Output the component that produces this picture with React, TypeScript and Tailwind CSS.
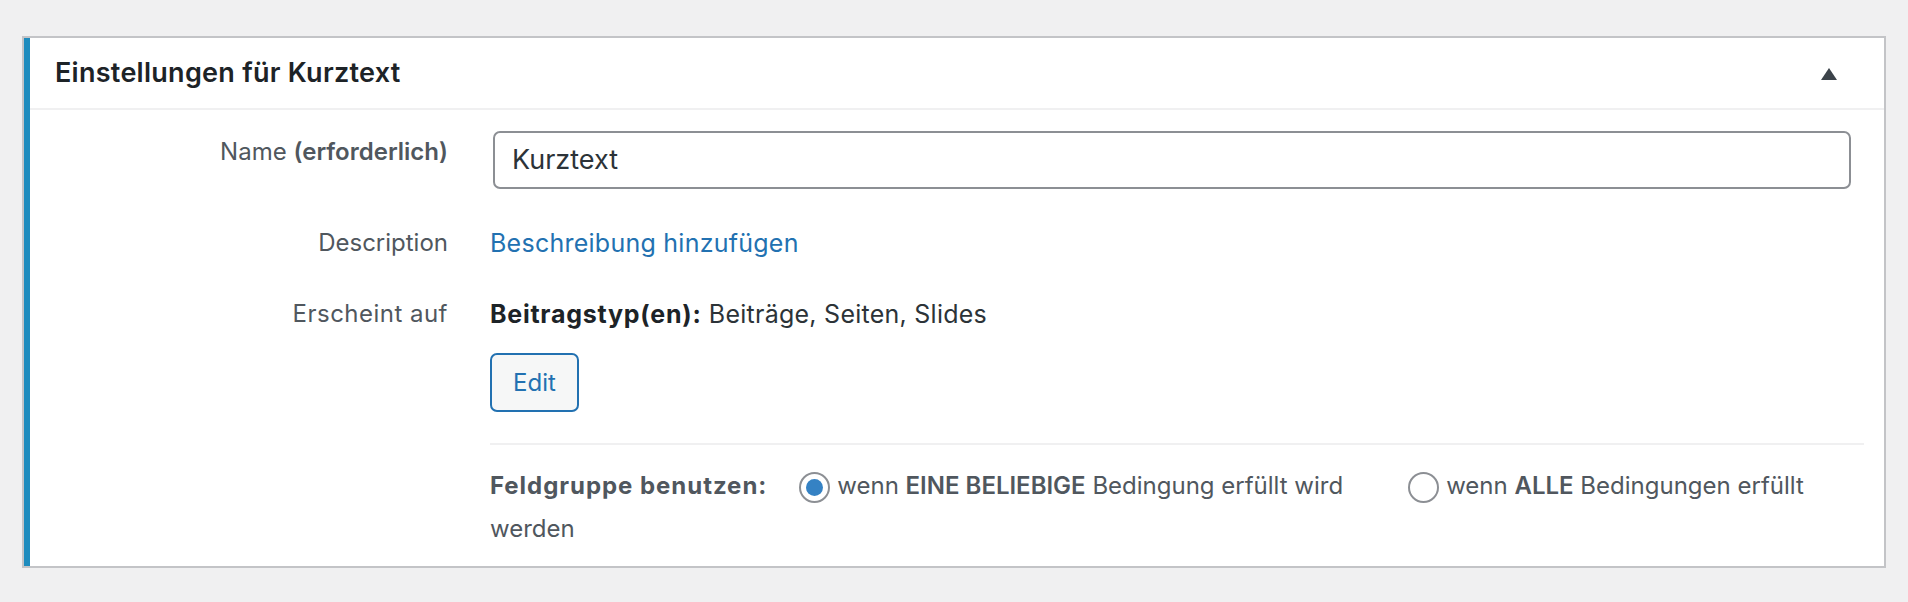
import React from "react";

const font = { fontFamily: "Inter, 'Noto Sans', sans-serif" };

function Radio({ checked }: { checked?: boolean }) {
  return (
    <span className="inline-flex h-[31px] w-[31px] items-center justify-center rounded-full border-2 border-[#8c8f94] bg-white align-middle">
      {checked && <span className="h-[17px] w-[17px] rounded-full bg-[#3582c4]" />}
    </span>
  );
}

export default function App() {
  return (
    <div
      className="min-h-[602px] w-full bg-[#f0f0f1] pt-[36px] pl-[22px] pr-[22px]"
      style={font}
    >
      <div className="flex border-2 border-[#c3c4c7] bg-white">
        {/* accent stripe on the left edge of the postbox */}
        <div className="w-[6px] shrink-0 bg-[#1e8cbe]" />

        <div className="flex-1">
          {/* postbox header */}
          <div className="flex h-[72px] items-center justify-between border-b-2 border-[#f0f0f1] pl-[25px] pr-[47px]">
            <h2 className="text-[27px] font-semibold leading-[32px] tracking-[0.01em] text-[#1d2327]">
              Einstellungen für Kurztext
            </h2>
            <svg width="16" height="12" viewBox="0 0 16 12" className="mt-[2px]">
              <polygon points="8,0 16,12 0,12" fill="#3c434a" />
            </svg>
          </div>

          {/* settings rows */}
          <div className="grid grid-cols-[460px_1fr] pb-[16px]">
            {/* Name */}
            <div className="pt-[26px] pr-[42px] text-right text-[24px] leading-[32px] text-[#50575e]">
              Name <span className="font-semibold">(erforderlich)</span>
            </div>
            <div className="pt-[21px] pr-[20px]">
              <div className="ml-[3px] flex h-[58px] w-[calc(100%-16px)] items-center rounded-[7px] border-2 border-[#8c8f94] pl-[17px] text-[27px] text-[#2c3338]">
                Kurztext
              </div>
            </div>

            {/* Description */}
            <div className="pt-[38px] pr-[42px] text-right text-[24px] leading-[32px] text-[#50575e]">
              Description
            </div>
            <div className="pt-[38px] pr-[20px] text-[25px] leading-[32px] tracking-[0.01em] text-[#2271b1]">
              Beschreibung hinzufügen
            </div>

            {/* Location */}
            <div className="pt-[39px] pr-[42px] text-right text-[24px] leading-[32px] tracking-[0.02em] text-[#50575e]">
              Erscheint auf
            </div>
            <div className="pt-[39px] pr-[20px]">
              <div className="text-[25px] leading-[32px] tracking-[0.01em] text-[#2c3338]">
                <span className="font-bold tracking-[0.03em] text-[#1d2327]">Beitragstyp(en):</span> Beiträge, Seiten, Slides
              </div>
              <div className="mt-[23px] flex h-[59px] w-[89px] items-center justify-center rounded-[7px] border-2 border-[#2271b1] bg-[#f6f7f7] text-[24px] text-[#2271b1]">
                Edit
              </div>
              <div className="mt-[31px] h-[2px] bg-[#f0f0f1]" />
              <p className="mt-[19px] text-[24px] leading-[43px] text-[#50575e]">
                <strong className="font-bold tracking-[0.04em]">Feldgruppe benutzen:</strong>
                <span className="ml-[32px]">
                  <Radio checked />
                  <span className="ml-[7px]">
                    wenn <strong className="font-semibold">EINE BELIEBIGE</strong> Bedingung erfüllt wird
                  </span>
                </span>
                <span className="ml-[65px]">
                  <Radio />
                  <span className="ml-[7px]">
                    wenn <strong className="font-semibold">ALLE</strong> Bedingungen erfüllt werden
                  </span>
                </span>
              </p>
            </div>
          </div>
        </div>
      </div>
    </div>
  );
}
